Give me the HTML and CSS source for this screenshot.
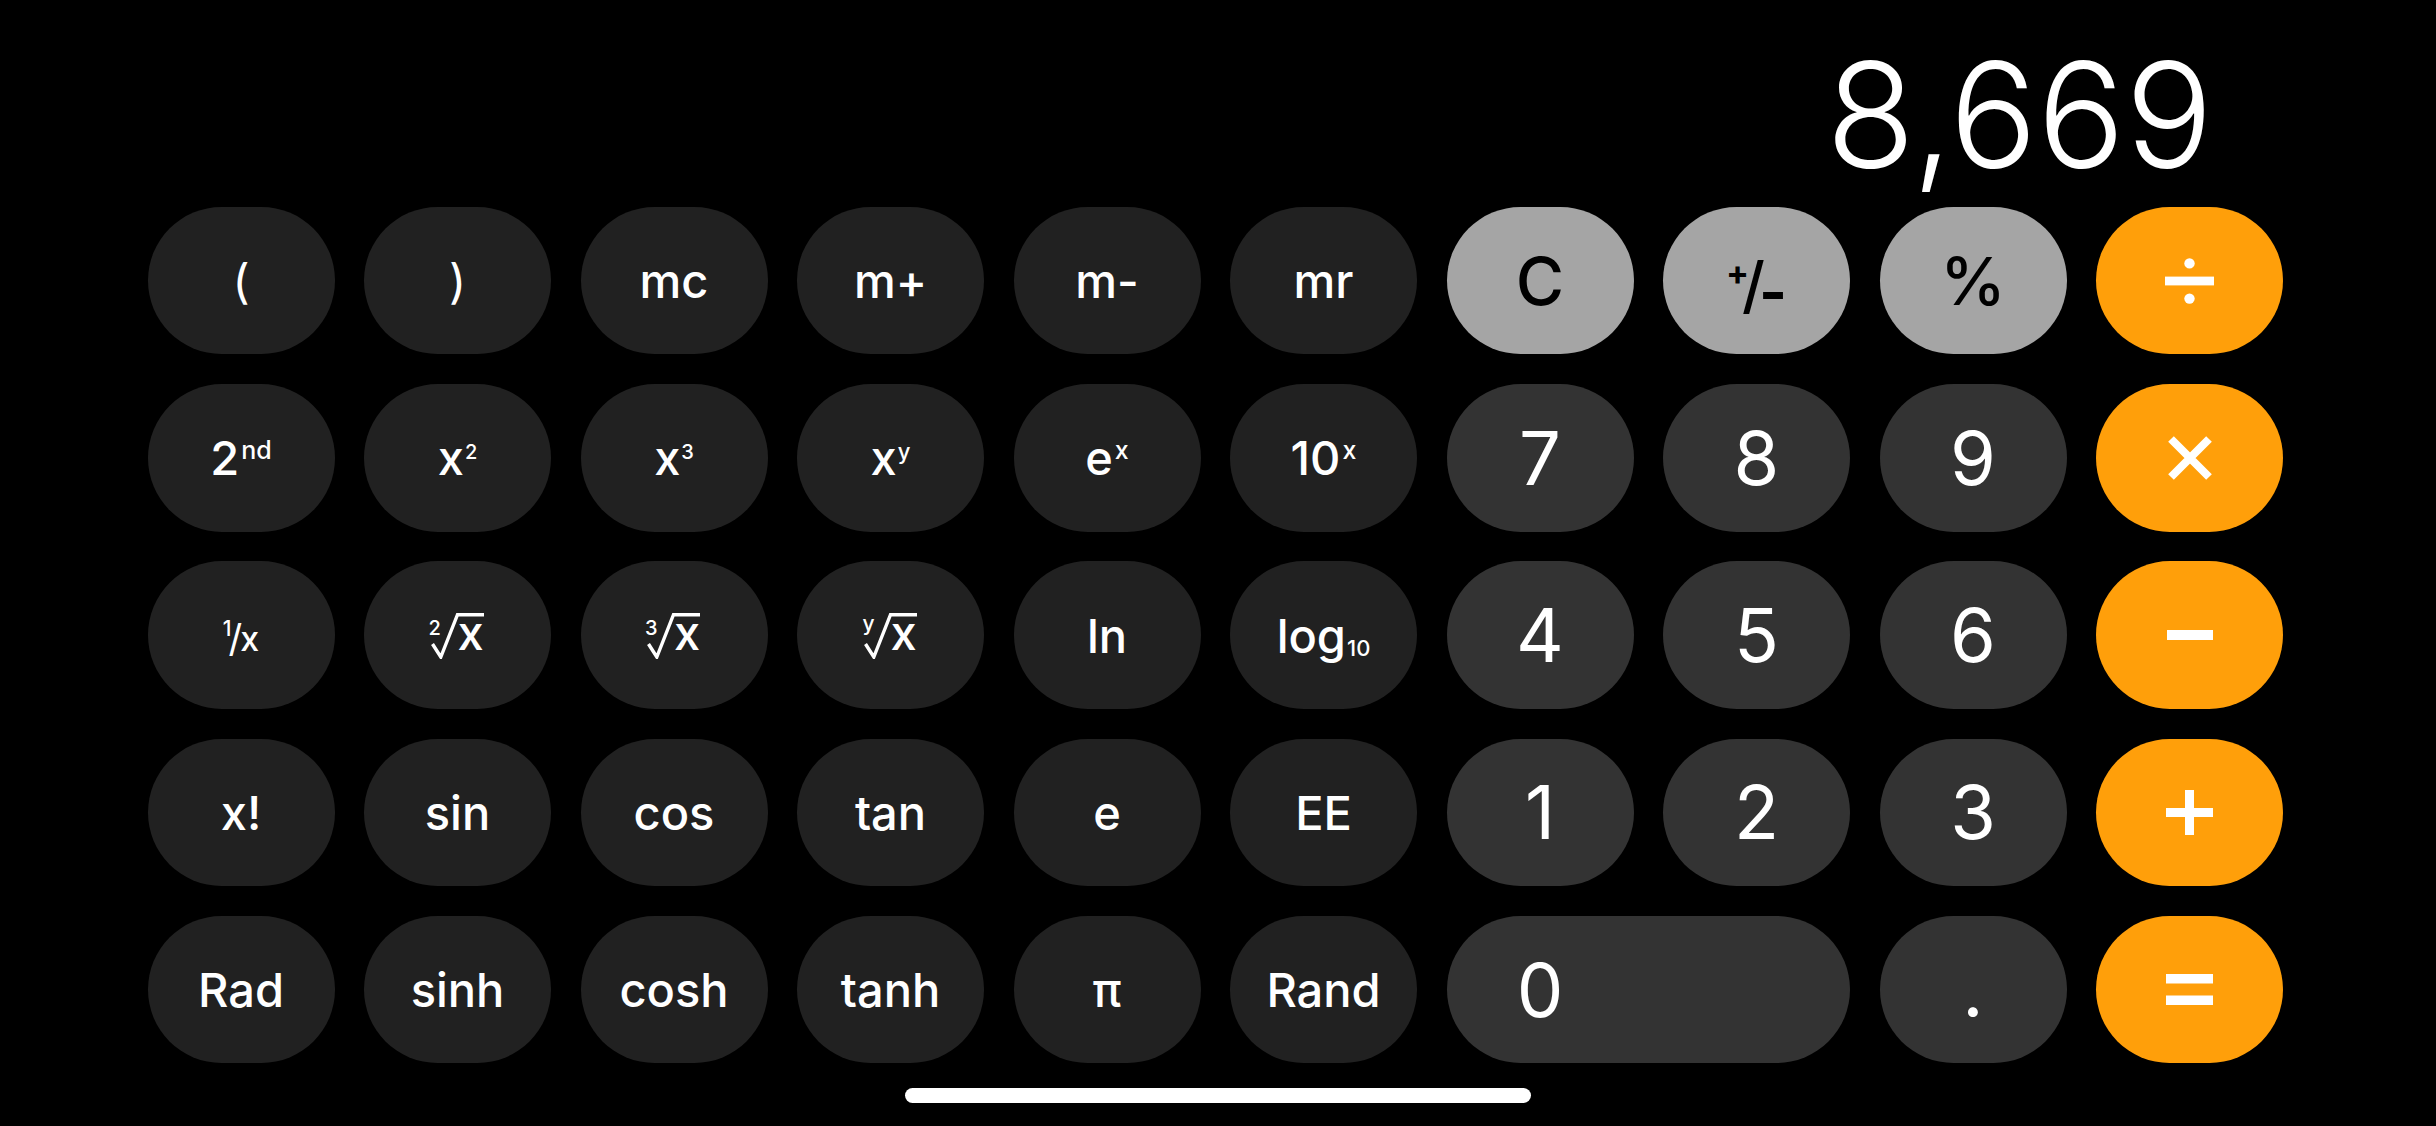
FILE: index.html
```html
<!DOCTYPE html>
<html lang="en">
<head>
<meta charset="utf-8">
<title>Calculator</title>
<link rel="stylesheet" href="styles.css">
</head>
<body>
<div class="screen">
  <div class="display">8,669</div>
  <div class="keypad">
    <div class="key fn paren">(</div>
    <div class="key fn paren">)</div>
    <div class="key fn">mc</div>
    <div class="key fn">m+</div>
    <div class="key fn">m-</div>
    <div class="key fn">mr</div>
    <div class="key util">C</div>
    <div class="key util"><span class="lbl"><span class="pm-plus">+</span><span class="pm-sl">/</span><span class="pm-minus">-</span></span></div>
    <div class="key util">%</div>
    <div class="key op" aria-label="÷"><svg class="ico" width="49" height="46" viewBox="0 0 49 46"><circle cx="24.5" cy="5.4" r="5.2"/><rect x="0" y="18.6" width="49" height="8.8"/><circle cx="24.5" cy="40.6" r="5.2"/></svg></div>

    <div class="key fn"><span class="lbl">2<span class="sup">nd</span></span></div>
    <div class="key fn"><span class="lbl">x<span class="sup-d">2</span></span></div>
    <div class="key fn"><span class="lbl">x<span class="sup-d">3</span></span></div>
    <div class="key fn"><span class="lbl">x<span class="sup-y">y</span></span></div>
    <div class="key fn"><span class="lbl">e<span class="sup">x</span></span></div>
    <div class="key fn"><span class="lbl">10<span class="sup">x</span></span></div>
    <div class="key num">7</div>
    <div class="key num">8</div>
    <div class="key num">9</div>
    <div class="key op" aria-label="×"><svg class="ico" width="44" height="44" viewBox="0 0 44 44"><path d="M3 3 L41 41 M41 3 L3 41" stroke-width="8" fill="none"/></svg></div>

    <div class="key fn"><span class="lbl"><span class="f-num">1</span><span class="f-sl">/</span><span class="f-den">x</span></span></div>
    <div class="key fn"><span class="root"><svg class="rad" width="54" height="46" viewBox="0 0 54 46"><path d="M1.5 31 L9.8 44 L26.5 1.7 L53 1.7" stroke-width="3.4" fill="none"/></svg><span class="idx">2</span><span class="rx">x</span></span></div>
    <div class="key fn"><span class="root"><svg class="rad" width="54" height="46" viewBox="0 0 54 46"><path d="M1.5 31 L9.8 44 L26.5 1.7 L53 1.7" stroke-width="3.4" fill="none"/></svg><span class="idx">3</span><span class="rx">x</span></span></div>
    <div class="key fn"><span class="root"><svg class="rad" width="54" height="46" viewBox="0 0 54 46"><path d="M1.5 31 L9.8 44 L26.5 1.7 L53 1.7" stroke-width="3.4" fill="none"/></svg><span class="idx idx-y">y</span><span class="rx">x</span></span></div>
    <div class="key fn">ln</div>
    <div class="key fn"><span class="lbl">log<span class="sub">10</span></span></div>
    <div class="key num">4</div>
    <div class="key num">5</div>
    <div class="key num">6</div>
    <div class="key op" aria-label="−"><svg class="ico" width="46" height="10" viewBox="0 0 46 10"><rect x="0" y="0" width="46" height="10"/></svg></div>

    <div class="key fn">x!</div>
    <div class="key fn">sin</div>
    <div class="key fn">cos</div>
    <div class="key fn">tan</div>
    <div class="key fn">e</div>
    <div class="key fn">EE</div>
    <div class="key num">1</div>
    <div class="key num">2</div>
    <div class="key num">3</div>
    <div class="key op" aria-label="+"><svg class="ico" width="47" height="45" viewBox="0 0 47 45"><rect x="0" y="18" width="47" height="9"/><rect x="19" y="0" width="9" height="45"/></svg></div>

    <div class="key fn">Rad</div>
    <div class="key fn">sinh</div>
    <div class="key fn">cosh</div>
    <div class="key fn">tanh</div>
    <div class="key fn">π</div>
    <div class="key fn">Rand</div>
    <div class="key num zero"><span class="zero-label">0</span></div>
    <div class="key num">.</div>
    <div class="key op" aria-label="="><svg class="ico" width="47" height="31" viewBox="0 0 47 31"><rect x="0" y="0" width="47" height="9.5"/><rect x="0" y="21.5" width="47" height="9.5"/></svg></div>
  </div>
  <div class="home"></div>
</div>
</body>
</html>
```

FILE: styles.css
```css
html, body {
  margin: 0;
  padding: 0;
  background: #000;
}

body {
  width: 2436px;
  height: 1126px;
  overflow: hidden;
  font-family: Inter, "Noto Sans", "Liberation Sans", sans-serif;
  color: #fff;
}

.screen {
  display: flex;
  flex-direction: column;
  height: 1126px;
}

.display {
  height: 146px;
  margin-top: 42px;
  padding-right: 223px;
  text-align: right;
  font-size: 146px;
  font-weight: 300;
  line-height: 146px;
}

.keypad {
  display: grid;
  grid-template-columns: repeat(10, 187px);
  grid-template-rows: repeat(5, 147.5px);
  column-gap: 29.5px;
  row-gap: 29.8px;
  margin: 18.8px 0 0 147.5px;
}

.key {
  display: flex;
  align-items: center;
  justify-content: center;
  border-radius: 74px;
  font-size: 47px;
  font-weight: 500;
  line-height: 1;
  color: #fff;
  white-space: nowrap;
}

.paren {
  font-weight: 400;
}

.lbl {
  display: block;
  line-height: 47px;
  height: 47px;
}

.fn {
  background: #212121;
}

.num {
  background: #333333;
  font-size: 74px;
  font-weight: 400;
}

.util {
  background: #a5a5a5;
  color: #000;
  font-size: 66px;
  font-weight: 500;
}

.util .lbl {
  line-height: 66px;
  height: 66px;
}

.op {
  background: #ff9f0a;
}

.ico {
  display: block;
  fill: #fff;
  stroke: #fff;
}

.ico rect, .ico circle {
  stroke: none;
}

.zero {
  grid-column: span 2;
  justify-content: flex-start;
}

.zero-label {
  width: 187px;
  text-align: center;
}

/* superscripts / subscripts */
.sup {
  font-size: 25px;
  line-height: 0;
  vertical-align: 16px;
  margin-left: 2px;
}

.sup-d {
  font-size: 20px;
  line-height: 0;
  vertical-align: 16px;
  margin-left: 1px;
}

.sup-y {
  font-size: 22px;
  line-height: 0;
  vertical-align: 16px;
  margin-left: 1px;
}

.sub {
  font-size: 22px;
  line-height: 0;
  vertical-align: -3px;
  margin-left: 1px;
}

/* 1/x */
.f-num {
  font-size: 21px;
  line-height: 0;
  vertical-align: 17px;
  letter-spacing: -3px;
}

.f-sl {
  font-size: 38px;
  line-height: 0;
  vertical-align: 1px;
  font-weight: 400;
  letter-spacing: -2px;
}

.f-den {
  font-size: 34px;
  line-height: 0;
  vertical-align: 2px;
}

/* roots */
.root {
  display: grid;
  width: 54px;
  height: 46px;
  margin-top: 1px;
}

.root > * {
  grid-area: 1 / 1;
}

.rad {
  display: block;
  stroke: #fff;
}

.idx {
  font-size: 20px;
  line-height: 20px;
  align-self: start;
  justify-self: start;
  margin-top: 5.1px;
  margin-left: -2px;
}

.idx-y {
  font-size: 21px;
  line-height: 21px;
  margin-top: 0;
  margin-left: -1px;
}

.rx {
  font-size: 47px;
  line-height: 47px;
  align-self: start;
  justify-self: start;
  margin-top: -3.3px;
  margin-left: 27px;
}

/* +/- */
.pm-plus {
  font-size: 34px;
  font-weight: 700;
  line-height: 0;
  vertical-align: 20px;
  letter-spacing: -7px;
}

.pm-sl {
  font-size: 62px;
  font-weight: 500;
  line-height: 0;
  vertical-align: -2px;
  letter-spacing: -6px;
}

.pm-minus {
  font-size: 60px;
  font-weight: 700;
  line-height: 0;
  vertical-align: -8px;
}

.home {
  width: 626px;
  height: 15px;
  border-radius: 8px;
  background: #fff;
  margin: 25px auto 0;
}
```
